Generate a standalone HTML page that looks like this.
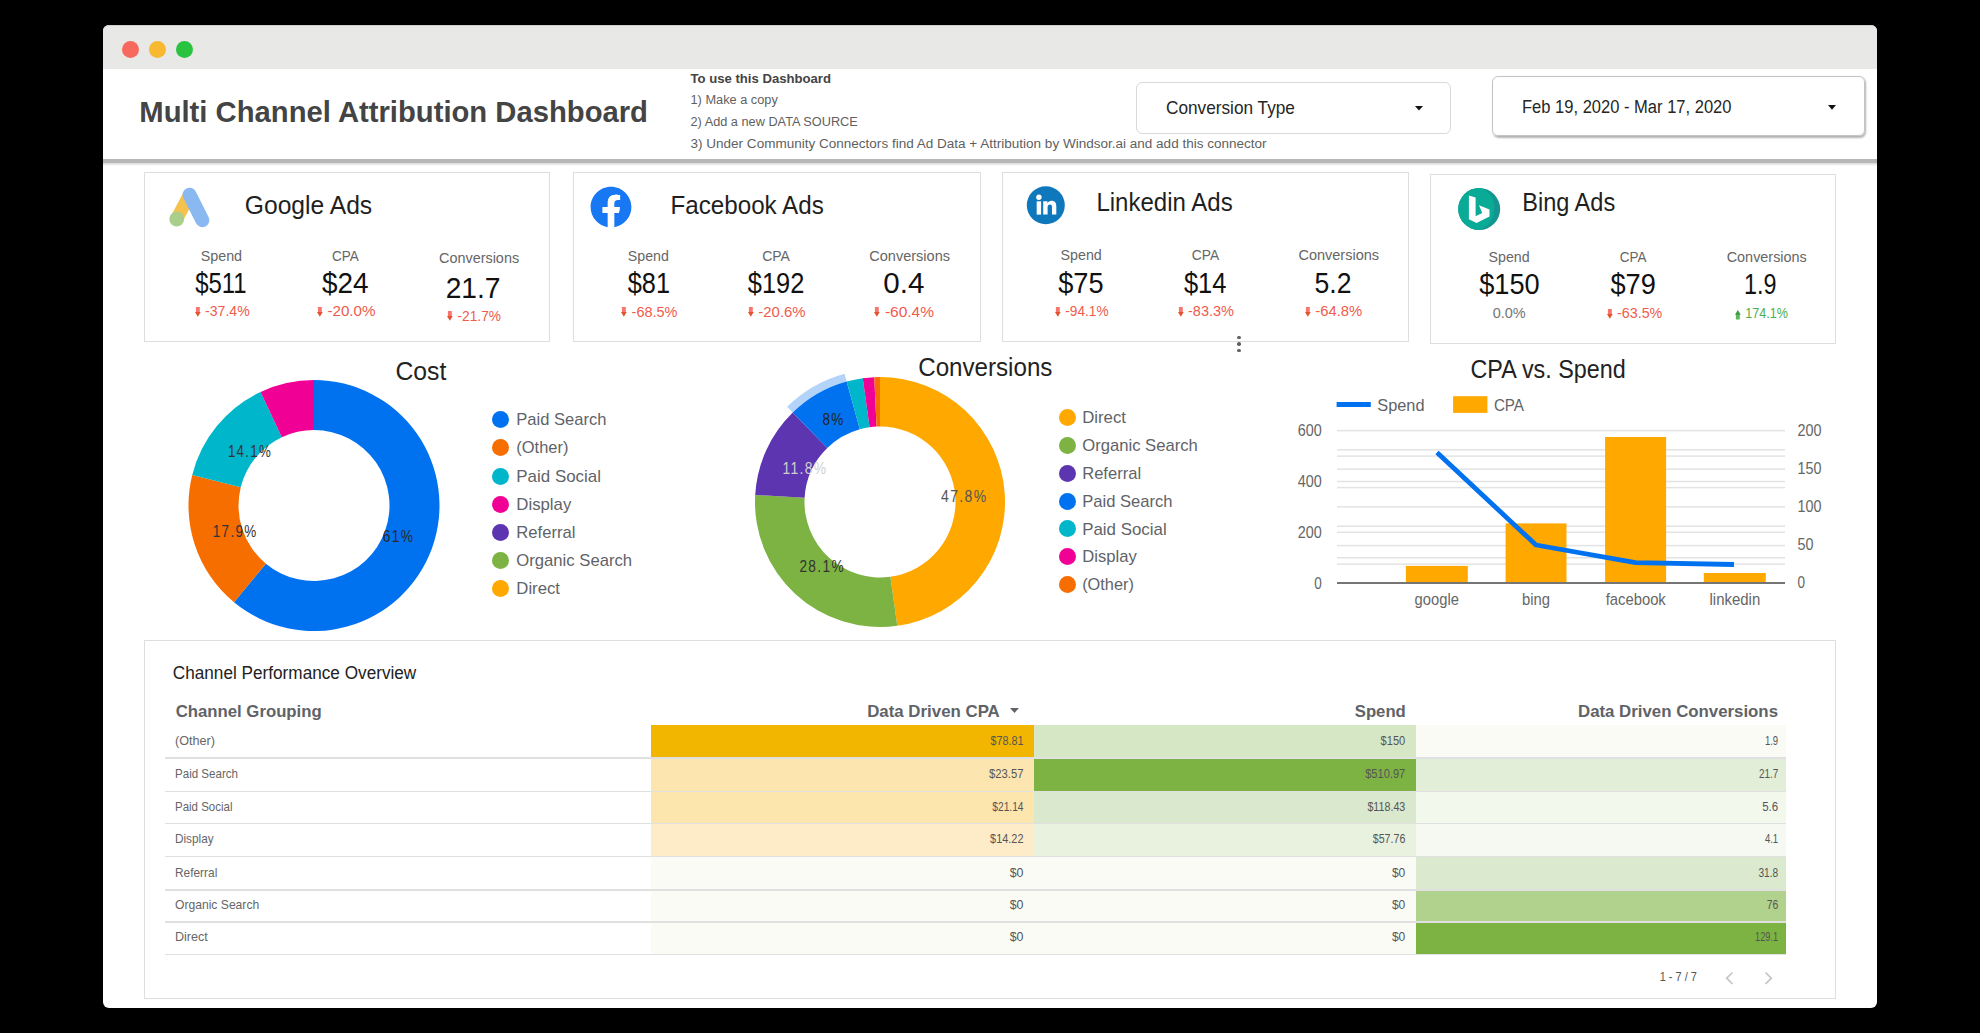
<!DOCTYPE html><html><head><meta charset="utf-8"><style>html,body{margin:0;padding:0;background:#000;width:1980px;height:1033px;overflow:hidden;}.t{position:absolute;white-space:nowrap;font-family:"Liberation Sans",sans-serif;transform-origin:0 0;}</style></head><body><div style="position:absolute;left:103px;top:25px;width:1774px;height:983px;background:#fff;border-radius:6px;"></div>
<div style="position:absolute;left:103px;top:25px;width:1774px;height:44px;background:#e8e8e7;border-radius:6px 6px 0 0;border-top:1px solid #cfcfcf;box-sizing:border-box;"></div>
<div style="position:absolute;left:122.0px;top:40.5px;width:17px;height:17px;background:#f7695e;border-radius:50%;"></div>
<div style="position:absolute;left:149.0px;top:40.5px;width:17px;height:17px;background:#f6b92f;border-radius:50%;"></div>
<div style="position:absolute;left:176.0px;top:40.5px;width:17px;height:17px;background:#2ac340;border-radius:50%;"></div>
<div style="position:absolute;left:1136px;top:82px;width:315px;height:52px;border:1.5px solid #d9d9d9;border-radius:6px;box-sizing:border-box;"></div>
<svg style="position:absolute;left:1414.5px;top:105.5px" width="9" height="6"><path d="M0 0H8L4 4.5Z" fill="#111"/></svg>
<div style="position:absolute;left:1492px;top:76px;width:373px;height:60px;border:1px solid #c4c4c4;border-radius:6px;box-sizing:border-box;box-shadow:1px 1.5px 2px rgba(0,0,0,.3);"></div>
<svg style="position:absolute;left:1828px;top:104.5px" width="9" height="6"><path d="M0 0H8L4 4.7Z" fill="#111"/></svg>
<div style="position:absolute;left:103px;top:159px;width:1774px;height:4px;background:#b6b7b6;"></div>
<div style="position:absolute;left:103px;top:163px;width:1774px;height:3px;background:linear-gradient(#d8d8d8,#fff);"></div>
<div style="position:absolute;left:144px;top:172px;width:406px;height:170px;border:1px solid #dedede;box-sizing:border-box;"></div>
<svg style="position:absolute;left:194.6px;top:306.8px" width="7" height="11"><rect x="0.9" y="0" width="3.9" height="6" fill="#f7776f"/><path d="M0 5H5.7L2.85 9.7Z" fill="#e2522f"/></svg>
<svg style="position:absolute;left:316.9px;top:306.8px" width="7" height="11"><rect x="0.9" y="0" width="3.9" height="6" fill="#f7776f"/><path d="M0 5H5.7L2.85 9.7Z" fill="#e2522f"/></svg>
<svg style="position:absolute;left:447.0px;top:311.1px" width="7" height="11"><rect x="0.9" y="0" width="3.9" height="6" fill="#f7776f"/><path d="M0 5H5.7L2.85 9.7Z" fill="#e2522f"/></svg>
<div style="position:absolute;left:573px;top:172px;width:408px;height:170px;border:1px solid #dedede;box-sizing:border-box;"></div>
<svg style="position:absolute;left:621.1px;top:307.2px" width="7" height="11"><rect x="0.9" y="0" width="3.9" height="6" fill="#f7776f"/><path d="M0 5H5.7L2.85 9.7Z" fill="#e2522f"/></svg>
<svg style="position:absolute;left:747.8px;top:307.2px" width="7" height="11"><rect x="0.9" y="0" width="3.9" height="6" fill="#f7776f"/><path d="M0 5H5.7L2.85 9.7Z" fill="#e2522f"/></svg>
<svg style="position:absolute;left:874.4px;top:307.2px" width="7" height="11"><rect x="0.9" y="0" width="3.9" height="6" fill="#f7776f"/><path d="M0 5H5.7L2.85 9.7Z" fill="#e2522f"/></svg>
<div style="position:absolute;left:1002px;top:172px;width:407px;height:170px;border:1px solid #dedede;box-sizing:border-box;"></div>
<svg style="position:absolute;left:1054.8px;top:306.9px" width="7" height="11"><rect x="0.9" y="0" width="3.9" height="6" fill="#f7776f"/><path d="M0 5H5.7L2.85 9.7Z" fill="#e2522f"/></svg>
<svg style="position:absolute;left:1177.5px;top:306.9px" width="7" height="11"><rect x="0.9" y="0" width="3.9" height="6" fill="#f7776f"/><path d="M0 5H5.7L2.85 9.7Z" fill="#e2522f"/></svg>
<svg style="position:absolute;left:1304.8px;top:306.9px" width="7" height="11"><rect x="0.9" y="0" width="3.9" height="6" fill="#f7776f"/><path d="M0 5H5.7L2.85 9.7Z" fill="#e2522f"/></svg>
<div style="position:absolute;left:1430px;top:174px;width:406px;height:170px;border:1px solid #dedede;box-sizing:border-box;"></div>
<svg style="position:absolute;left:1606.6px;top:308.5px" width="7" height="11"><rect x="0.9" y="0" width="3.9" height="6" fill="#f7776f"/><path d="M0 5H5.7L2.85 9.7Z" fill="#e2522f"/></svg>
<svg style="position:absolute;left:1734.8px;top:309.5px" width="7" height="11"><rect x="0.9" y="4" width="3.9" height="5.5" fill="#5cb85c"/><path d="M0 4.7H5.7L2.85 0Z" fill="#3c9a40"/></svg>
<svg style="position:absolute;left:0;top:0" width="1980" height="1033"><line x1="189.5" y1="194.7" x2="176.7" y2="219" stroke="#f5c24d" stroke-width="13"/><line x1="189.5" y1="194.7" x2="202.3" y2="220.2" stroke="#8ab9f1" stroke-width="14" stroke-linecap="round"/><circle cx="176.7" cy="219" r="7.4" fill="#a9cf8a"/><g transform="translate(590.6,186.6) scale(1.7)"><path d="M24 12.073c0-6.627-5.373-12-12-12s-12 5.373-12 12c0 5.99 4.388 10.954 10.125 11.854v-8.385H7.078v-3.47h3.047V9.43c0-3.007 1.792-4.669 4.533-4.669 1.312 0 2.686.235 2.686.235v2.953H15.83c-1.491 0-1.956.925-1.956 1.874v2.25h3.328l-.532 3.47h-2.796v8.385C19.612 23.027 24 18.062 24 12.073z" fill="#1877f2"/><path d="M16.671 15.543l.532-3.47h-3.328v-2.25c0-.949.465-1.874 1.956-1.874h1.513V4.996s-1.374-.235-2.686-.235c-2.741 0-4.533 1.662-4.533 4.669v2.643H7.078v3.47h3.047v8.385a12.09 12.09 0 003.75 0v-8.385h2.796z" fill="#fff"/></g><circle cx="1045.8" cy="205.3" r="19" fill="#0f78bd"/><circle cx="1038.9" cy="197.2" r="2.7" fill="#fff"/><rect x="1036.7" y="201.3" width="4.4" height="13.3" fill="#fff"/><path d="M1043.2 201.3H1047.4V203.2C1048.2 201.8 1049.6 200.8 1051.6 200.8C1054.9 200.8 1056.3 202.9 1056.3 206.3V214.6H1052V207.2C1052 205.6 1051.5 204.5 1050 204.5C1048.5 204.5 1047.6 205.6 1047.6 207.4V214.6H1043.2Z" fill="#fff"/><clipPath id="bc"><circle cx="1479.2" cy="209" r="21"/></clipPath><circle cx="1479.2" cy="209" r="21" fill="#159590"/><ellipse clip-path="url(#bc)" cx="1476" cy="208.5" rx="18.3" ry="21.5" fill="#0aab96"/><path d="M1468.9 195.4L1475.6 197.6V216.3L1482.2 213L1479 205.2L1489.5 209.6V216.4L1476.6 223L1468.9 219.2Z" fill="#fff"/></svg>
<svg style="position:absolute;left:0;top:0" width="1980" height="1033"><path d="M314.00 380.00A125.5 125.5 0 1 1 234.00 602.20L265.87 563.67A75.5 75.5 0 1 0 314.00 430.00Z" fill="#0072f0"/><path d="M234.00 602.20A125.5 125.5 0 0 1 192.25 475.05L240.76 487.18A75.5 75.5 0 0 0 265.87 563.67Z" fill="#f66d00"/><path d="M192.25 475.05A125.5 125.5 0 0 1 260.56 391.94L281.85 437.19A75.5 75.5 0 0 0 240.76 487.18Z" fill="#00b6cb"/><path d="M260.56 391.94A125.5 125.5 0 0 1 314.00 380.00L314.00 430.00A75.5 75.5 0 0 0 281.85 437.19Z" fill="#f10096"/><path d="M880.00 377.00A125 125 0 0 1 897.22 625.81L890.40 576.78A75.5 75.5 0 0 0 880.00 426.50Z" fill="#ffa800"/><path d="M897.22 625.81A125 125 0 0 1 755.20 494.94L804.62 497.73A75.5 75.5 0 0 0 890.40 576.78Z" fill="#7cb342"/><path d="M755.20 494.94A125 125 0 0 1 792.73 412.51L827.29 447.95A75.5 75.5 0 0 0 804.62 497.73Z" fill="#5e35b1"/><path d="M787.14 406.78A133 133 0 0 1 844.50 373.82L846.64 381.53A125 125 0 0 0 792.73 412.51Z" fill="#b3d3f8"/><path d="M792.73 412.51A125 125 0 0 1 846.64 381.53L859.85 429.24A75.5 75.5 0 0 0 827.29 447.95Z" fill="#0072f0"/><path d="M846.64 381.53A125 125 0 0 1 862.78 378.19L869.60 427.22A75.5 75.5 0 0 0 859.85 429.24Z" fill="#00b6cb"/><path d="M862.78 378.19A125 125 0 0 1 874.27 377.13L876.54 426.58A75.5 75.5 0 0 0 869.60 427.22Z" fill="#f10096"/><path d="M874.27 377.13A125 125 0 0 1 880.00 377.00L880.00 426.50A75.5 75.5 0 0 0 876.54 426.58Z" fill="#f66d00"/></svg>
<div style="position:absolute;left:492.3px;top:411.1px;width:17px;height:17px;background:#0072f0;border-radius:50%;"></div>
<div style="position:absolute;left:492.3px;top:439.3px;width:17px;height:17px;background:#f66d00;border-radius:50%;"></div>
<div style="position:absolute;left:492.3px;top:467.5px;width:17px;height:17px;background:#00b6cb;border-radius:50%;"></div>
<div style="position:absolute;left:492.3px;top:495.7px;width:17px;height:17px;background:#f10096;border-radius:50%;"></div>
<div style="position:absolute;left:492.3px;top:523.9px;width:17px;height:17px;background:#5e35b1;border-radius:50%;"></div>
<div style="position:absolute;left:492.3px;top:552.1px;width:17px;height:17px;background:#7cb342;border-radius:50%;"></div>
<div style="position:absolute;left:492.3px;top:580.3px;width:17px;height:17px;background:#ffa800;border-radius:50%;"></div>
<div style="position:absolute;left:1058.5px;top:408.5px;width:17px;height:17px;background:#ffa800;border-radius:50%;"></div>
<div style="position:absolute;left:1058.5px;top:436.5px;width:17px;height:17px;background:#7cb342;border-radius:50%;"></div>
<div style="position:absolute;left:1058.5px;top:464.5px;width:17px;height:17px;background:#5e35b1;border-radius:50%;"></div>
<div style="position:absolute;left:1058.5px;top:492.5px;width:17px;height:17px;background:#0072f0;border-radius:50%;"></div>
<div style="position:absolute;left:1058.5px;top:520.4px;width:17px;height:17px;background:#00b6cb;border-radius:50%;"></div>
<div style="position:absolute;left:1058.5px;top:548.3px;width:17px;height:17px;background:#f10096;border-radius:50%;"></div>
<div style="position:absolute;left:1058.5px;top:576.3px;width:17px;height:17px;background:#f66d00;border-radius:50%;"></div>
<div style="position:absolute;left:1237.3px;top:335.8px;width:3.4px;height:3.4px;background:#5f6368;border-radius:50%;"></div>
<div style="position:absolute;left:1237.3px;top:342.3px;width:3.4px;height:3.4px;background:#5f6368;border-radius:50%;"></div>
<div style="position:absolute;left:1237.3px;top:348.8px;width:3.4px;height:3.4px;background:#5f6368;border-radius:50%;"></div>
<svg style="position:absolute;left:0;top:0" width="1980" height="1033"><rect x="1337" y="429.85" width="448" height="1.5" fill="#e3e3e3"/><rect x="1337" y="449.05" width="448" height="1.5" fill="#e3e3e3"/><rect x="1337" y="455.35" width="448" height="1.5" fill="#e3e3e3"/><rect x="1337" y="468.45" width="448" height="1.5" fill="#e3e3e3"/><rect x="1337" y="480.75" width="448" height="1.5" fill="#e3e3e3"/><rect x="1337" y="486.85" width="448" height="1.5" fill="#e3e3e3"/><rect x="1337" y="506.15" width="448" height="1.5" fill="#e3e3e3"/><rect x="1337" y="525.45" width="448" height="1.5" fill="#e3e3e3"/><rect x="1337" y="531.55" width="448" height="1.5" fill="#e3e3e3"/><rect x="1337" y="544.85" width="448" height="1.5" fill="#e3e3e3"/><rect x="1337" y="557.05" width="448" height="1.5" fill="#e3e3e3"/><rect x="1337" y="563.35" width="448" height="1.5" fill="#e3e3e3"/><rect x="1405.9" y="565.9" width="61.9" height="17.1" fill="#ffa800"/><rect x="1505.6" y="523.4" width="60.9" height="59.6" fill="#ffa800"/><rect x="1605.1" y="437" width="61.0" height="146.0" fill="#ffa800"/><rect x="1703.8" y="573" width="62.0" height="10.0" fill="#ffa800"/><rect x="1337" y="582" width="448" height="2" fill="#757575"/><polyline points="1437,452.6 1536,545 1635.5,562.6 1734,564.5" fill="none" stroke="#0072f0" stroke-width="4.8" stroke-linejoin="round"/><rect x="1336.6" y="402" width="34.2" height="5" fill="#0072f0"/><rect x="1453.1" y="396.2" width="34.3" height="16.7" fill="#ffa800"/></svg>
<div style="position:absolute;left:144px;top:640px;width:1692px;height:359px;border:1px solid #dedede;box-sizing:border-box;"></div>
<svg style="position:absolute;left:1010px;top:708px" width="10" height="6"><path d="M0 0H9L4.5 5Z" fill="#5f6368"/></svg>
<div style="position:absolute;left:651px;top:725px;width:383px;height:33px;background:#f2b600;"></div>
<div style="position:absolute;left:1034px;top:725px;width:382px;height:33px;background:#d6e7c6;"></div>
<div style="position:absolute;left:1416px;top:725px;width:370px;height:33px;background:#fafbf5;"></div>
<div style="position:absolute;left:165px;top:757.25px;width:1621px;height:1.5px;background:#e0e0e0;"></div>
<div style="position:absolute;left:651px;top:758.75px;width:383px;height:32.64999999999998px;background:#fde5b0;"></div>
<div style="position:absolute;left:1034px;top:758.75px;width:382px;height:32.64999999999998px;background:#7cb342;"></div>
<div style="position:absolute;left:1416px;top:758.75px;width:370px;height:32.64999999999998px;background:#e2eed8;"></div>
<div style="position:absolute;left:165px;top:790.65px;width:1621px;height:1.5px;background:#e0e0e0;"></div>
<div style="position:absolute;left:651px;top:792.15px;width:383px;height:31.550000000000068px;background:#fde5ae;"></div>
<div style="position:absolute;left:1034px;top:792.15px;width:382px;height:31.550000000000068px;background:#dae8cd;"></div>
<div style="position:absolute;left:1416px;top:792.15px;width:370px;height:31.550000000000068px;background:#f3f8ed;"></div>
<div style="position:absolute;left:165px;top:822.95px;width:1621px;height:1.5px;background:#e0e0e0;"></div>
<div style="position:absolute;left:651px;top:824.45px;width:383px;height:31.949999999999932px;background:#fdecc7;"></div>
<div style="position:absolute;left:1034px;top:824.45px;width:382px;height:31.949999999999932px;background:#e8f2df;"></div>
<div style="position:absolute;left:1416px;top:824.45px;width:370px;height:31.949999999999932px;background:#f6f9f1;"></div>
<div style="position:absolute;left:165px;top:855.65px;width:1621px;height:1.5px;background:#e0e0e0;"></div>
<div style="position:absolute;left:651px;top:857.15px;width:383px;height:32.64999999999998px;background:#fbfbf5;"></div>
<div style="position:absolute;left:1034px;top:857.15px;width:382px;height:32.64999999999998px;background:#fbfbf5;"></div>
<div style="position:absolute;left:1416px;top:857.15px;width:370px;height:32.64999999999998px;background:#dbe9ce;"></div>
<div style="position:absolute;left:165px;top:889.05px;width:1621px;height:1.5px;background:#e0e0e0;"></div>
<div style="position:absolute;left:651px;top:890.55px;width:383px;height:31.550000000000068px;background:#fbfbf5;"></div>
<div style="position:absolute;left:1034px;top:890.55px;width:382px;height:31.550000000000068px;background:#fbfbf5;"></div>
<div style="position:absolute;left:1416px;top:890.55px;width:370px;height:31.550000000000068px;background:#b1d28d;"></div>
<div style="position:absolute;left:165px;top:921.35px;width:1621px;height:1.5px;background:#e0e0e0;"></div>
<div style="position:absolute;left:651px;top:922.85px;width:383px;height:31.549999999999955px;background:#fbfbf5;"></div>
<div style="position:absolute;left:1034px;top:922.85px;width:382px;height:31.549999999999955px;background:#fbfbf5;"></div>
<div style="position:absolute;left:1416px;top:922.85px;width:370px;height:31.549999999999955px;background:#7cb342;"></div>
<div style="position:absolute;left:165px;top:953.65px;width:1621px;height:1.5px;background:#e0e0e0;"></div>
<svg style="position:absolute;left:0;top:0" width="1980" height="1033"><path d="M1732.5 972.5L1726.7 978.2L1732.5 984" fill="none" stroke="#c4c4c4" stroke-width="1.7"/><path d="M1765.5 972.5L1771.3 978.2L1765.5 984" fill="none" stroke="#c4c4c4" stroke-width="1.7"/></svg><svg style="position:absolute;left:0;top:0;font-family:'Liberation Sans',sans-serif" width="1980" height="1033"><text x="139.30" y="121.50" font-size="29.80" fill="#444" font-weight="bold" textLength="508.68" lengthAdjust="spacingAndGlyphs">Multi Channel Attribution Dashboard</text>
<text x="690.50" y="82.80" font-size="13.08" fill="#444" font-weight="bold" textLength="140.51" lengthAdjust="spacingAndGlyphs">To use this Dashboard</text>
<text x="690.50" y="104.00" font-size="13.08" fill="#5f5f5f" textLength="87.29" lengthAdjust="spacingAndGlyphs">1) Make a copy</text>
<text x="690.50" y="125.50" font-size="13.08" fill="#5f5f5f" textLength="167.30" lengthAdjust="spacingAndGlyphs">2) Add a new DATA SOURCE</text>
<text x="690.50" y="147.80" font-size="13.08" fill="#5f5f5f" textLength="576.10" lengthAdjust="spacingAndGlyphs">3) Under Community Connectors find Ad Data + Attribution by Windsor.ai and add this connector</text>
<text x="1166.00" y="113.50" font-size="17.88" fill="#262626" textLength="128.92" lengthAdjust="spacingAndGlyphs">Conversion Type</text>
<text x="1522.00" y="113.30" font-size="17.88" fill="#262626" textLength="209.50" lengthAdjust="spacingAndGlyphs">Feb 19, 2020 - Mar 17, 2020</text>
<text x="244.80" y="213.50" font-size="25.15" fill="#1f1f1f" textLength="127.41" lengthAdjust="spacingAndGlyphs">Google Ads</text>
<text x="200.70" y="260.70" font-size="13.95" fill="#666" textLength="41.39" lengthAdjust="spacingAndGlyphs">Spend</text>
<text x="195.20" y="293.00" font-size="28.63" fill="#111" textLength="51.51" lengthAdjust="spacingAndGlyphs">$511</text>
<text x="205.10" y="316.30" font-size="13.95" fill="#ef5b4c" textLength="44.61" lengthAdjust="spacingAndGlyphs">-37.4%</text>
<text x="332.00" y="260.70" font-size="13.95" fill="#666" textLength="26.79" lengthAdjust="spacingAndGlyphs">CPA</text>
<text x="321.90" y="293.00" font-size="28.63" fill="#111" textLength="46.53" lengthAdjust="spacingAndGlyphs">$24</text>
<text x="327.40" y="316.30" font-size="13.95" fill="#ef5b4c" textLength="48.12" lengthAdjust="spacingAndGlyphs">-20.0%</text>
<text x="439.00" y="262.60" font-size="13.95" fill="#666" textLength="80.11" lengthAdjust="spacingAndGlyphs">Conversions</text>
<text x="445.70" y="297.50" font-size="29.80" fill="#111" textLength="54.87" lengthAdjust="spacingAndGlyphs">21.7</text>
<text x="457.50" y="320.60" font-size="13.95" fill="#ef5b4c" textLength="43.51" lengthAdjust="spacingAndGlyphs">-21.7%</text>
<text x="670.40" y="213.80" font-size="25.15" fill="#1f1f1f" textLength="153.40" lengthAdjust="spacingAndGlyphs">Facebook Ads</text>
<text x="627.80" y="261.00" font-size="13.95" fill="#666" textLength="41.09" lengthAdjust="spacingAndGlyphs">Spend</text>
<text x="627.80" y="293.30" font-size="28.63" fill="#111" textLength="42.23" lengthAdjust="spacingAndGlyphs">$81</text>
<text x="631.60" y="316.70" font-size="13.95" fill="#ef5b4c" textLength="45.72" lengthAdjust="spacingAndGlyphs">-68.5%</text>
<text x="762.20" y="261.00" font-size="13.95" fill="#666" textLength="27.79" lengthAdjust="spacingAndGlyphs">CPA</text>
<text x="747.80" y="293.30" font-size="28.63" fill="#111" textLength="56.59" lengthAdjust="spacingAndGlyphs">$192</text>
<text x="758.30" y="316.70" font-size="13.95" fill="#ef5b4c" textLength="47.32" lengthAdjust="spacingAndGlyphs">-20.6%</text>
<text x="869.30" y="261.00" font-size="13.95" fill="#666" textLength="80.71" lengthAdjust="spacingAndGlyphs">Conversions</text>
<text x="883.30" y="293.30" font-size="28.63" fill="#111" textLength="41.11" lengthAdjust="spacingAndGlyphs">0.4</text>
<text x="884.90" y="316.70" font-size="13.95" fill="#ef5b4c" textLength="49.12" lengthAdjust="spacingAndGlyphs">-60.4%</text>
<text x="1096.40" y="211.10" font-size="25.15" fill="#1f1f1f" textLength="136.33" lengthAdjust="spacingAndGlyphs">Linkedin Ads</text>
<text x="1060.50" y="260.00" font-size="13.95" fill="#666" textLength="41.29" lengthAdjust="spacingAndGlyphs">Spend</text>
<text x="1058.20" y="293.00" font-size="28.63" fill="#111" textLength="45.43" lengthAdjust="spacingAndGlyphs">$75</text>
<text x="1065.30" y="316.40" font-size="13.95" fill="#ef5b4c" textLength="43.31" lengthAdjust="spacingAndGlyphs">-94.1%</text>
<text x="1191.80" y="260.00" font-size="13.95" fill="#666" textLength="27.29" lengthAdjust="spacingAndGlyphs">CPA</text>
<text x="1183.90" y="293.00" font-size="28.63" fill="#111" textLength="42.53" lengthAdjust="spacingAndGlyphs">$14</text>
<text x="1188.00" y="316.40" font-size="13.95" fill="#ef5b4c" textLength="45.92" lengthAdjust="spacingAndGlyphs">-83.3%</text>
<text x="1298.40" y="260.00" font-size="13.95" fill="#666" textLength="80.71" lengthAdjust="spacingAndGlyphs">Conversions</text>
<text x="1314.50" y="293.00" font-size="28.63" fill="#111" textLength="36.91" lengthAdjust="spacingAndGlyphs">5.2</text>
<text x="1315.30" y="316.40" font-size="13.95" fill="#ef5b4c" textLength="47.02" lengthAdjust="spacingAndGlyphs">-64.8%</text>
<text x="1522.20" y="210.60" font-size="25.15" fill="#1f1f1f" textLength="93.00" lengthAdjust="spacingAndGlyphs">Bing Ads</text>
<text x="1488.50" y="262.20" font-size="13.95" fill="#666" textLength="41.19" lengthAdjust="spacingAndGlyphs">Spend</text>
<text x="1479.20" y="294.30" font-size="28.63" fill="#111" textLength="60.49" lengthAdjust="spacingAndGlyphs">$150</text>
<text x="1492.70" y="318.00" font-size="13.95" fill="#757575" textLength="32.99" lengthAdjust="spacingAndGlyphs">0.0%</text>
<text x="1619.80" y="262.20" font-size="13.95" fill="#666" textLength="26.69" lengthAdjust="spacingAndGlyphs">CPA</text>
<text x="1610.50" y="294.30" font-size="28.63" fill="#111" textLength="45.33" lengthAdjust="spacingAndGlyphs">$79</text>
<text x="1617.10" y="318.00" font-size="13.95" fill="#ef5b4c" textLength="45.22" lengthAdjust="spacingAndGlyphs">-63.5%</text>
<text x="1726.70" y="262.20" font-size="13.95" fill="#666" textLength="80.11" lengthAdjust="spacingAndGlyphs">Conversions</text>
<text x="1744.10" y="294.30" font-size="28.63" fill="#111" textLength="32.50" lengthAdjust="spacingAndGlyphs">1.9</text>
<text x="1745.30" y="318.00" font-size="13.95" fill="#4caf50" textLength="42.49" lengthAdjust="spacingAndGlyphs">174.1%</text>
<text x="395.50" y="380.20" font-size="25.73" fill="#222" textLength="50.83" lengthAdjust="spacingAndGlyphs">Cost</text>
<text x="918.20" y="375.80" font-size="25.58" fill="#222" textLength="134.22" lengthAdjust="spacingAndGlyphs">Conversions</text>
<text x="1470.50" y="377.60" font-size="25.29" fill="#222" textLength="155.19" lengthAdjust="spacingAndGlyphs">CPA vs. Spend</text>
<text x="227.90" y="456.90" font-size="16.72" fill="#333" letter-spacing="1.6" textLength="44.18" lengthAdjust="spacingAndGlyphs">14.1%</text>
<text x="212.80" y="537.40" font-size="16.72" fill="#333" letter-spacing="1.6" textLength="44.80" lengthAdjust="spacingAndGlyphs">17.9%</text>
<text x="382.80" y="541.70" font-size="16.72" fill="#2a2a2a" letter-spacing="1.6" textLength="31.50" lengthAdjust="spacingAndGlyphs">61%</text>
<text x="822.40" y="425.20" font-size="16.72" fill="#222" letter-spacing="1.6" textLength="22.10" lengthAdjust="spacingAndGlyphs">8%</text>
<text x="782.50" y="473.60" font-size="16.72" fill="#d0d0d0" letter-spacing="1.6" textLength="44.91" lengthAdjust="spacingAndGlyphs">11.8%</text>
<text x="941.10" y="502.10" font-size="16.72" fill="#555" letter-spacing="1.6" textLength="46.45" lengthAdjust="spacingAndGlyphs">47.8%</text>
<text x="799.40" y="571.50" font-size="16.72" fill="#333" letter-spacing="1.6" textLength="45.52" lengthAdjust="spacingAndGlyphs">28.1%</text>
<text x="516.30" y="425.20" font-size="17.15" fill="#5f6368" textLength="90.21" lengthAdjust="spacingAndGlyphs">Paid Search</text>
<text x="516.30" y="453.40" font-size="17.15" fill="#5f6368" textLength="52.09" lengthAdjust="spacingAndGlyphs">(Other)</text>
<text x="516.30" y="481.60" font-size="17.15" fill="#5f6368" textLength="84.71" lengthAdjust="spacingAndGlyphs">Paid Social</text>
<text x="516.30" y="509.80" font-size="17.15" fill="#5f6368" textLength="54.98" lengthAdjust="spacingAndGlyphs">Display</text>
<text x="516.30" y="538.00" font-size="17.15" fill="#5f6368" textLength="59.19" lengthAdjust="spacingAndGlyphs">Referral</text>
<text x="516.30" y="566.20" font-size="17.15" fill="#5f6368" textLength="115.81" lengthAdjust="spacingAndGlyphs">Organic Search</text>
<text x="516.30" y="594.40" font-size="17.15" fill="#5f6368" textLength="43.68" lengthAdjust="spacingAndGlyphs">Direct</text>
<text x="1082.20" y="422.60" font-size="17.15" fill="#5f6368" textLength="43.78" lengthAdjust="spacingAndGlyphs">Direct</text>
<text x="1082.20" y="450.60" font-size="17.15" fill="#5f6368" textLength="115.61" lengthAdjust="spacingAndGlyphs">Organic Search</text>
<text x="1082.20" y="478.60" font-size="17.15" fill="#5f6368" textLength="58.89" lengthAdjust="spacingAndGlyphs">Referral</text>
<text x="1082.20" y="506.60" font-size="17.15" fill="#5f6368" textLength="90.31" lengthAdjust="spacingAndGlyphs">Paid Search</text>
<text x="1082.20" y="534.50" font-size="17.15" fill="#5f6368" textLength="84.51" lengthAdjust="spacingAndGlyphs">Paid Social</text>
<text x="1082.20" y="562.40" font-size="17.15" fill="#5f6368" textLength="54.58" lengthAdjust="spacingAndGlyphs">Display</text>
<text x="1082.20" y="590.40" font-size="17.15" fill="#5f6368" textLength="51.69" lengthAdjust="spacingAndGlyphs">(Other)</text>
<text x="1377.30" y="410.70" font-size="17.15" fill="#5f6368" textLength="47.19" lengthAdjust="spacingAndGlyphs">Spend</text>
<text x="1493.90" y="410.70" font-size="17.15" fill="#5f6368" textLength="30.09" lengthAdjust="spacingAndGlyphs">CPA</text>
<text x="1297.70" y="436.00" font-size="15.70" fill="#666" textLength="24.01" lengthAdjust="spacingAndGlyphs">600</text>
<text x="1297.70" y="486.80" font-size="15.70" fill="#666" textLength="24.01" lengthAdjust="spacingAndGlyphs">400</text>
<text x="1297.70" y="537.70" font-size="15.70" fill="#666" textLength="24.01" lengthAdjust="spacingAndGlyphs">200</text>
<text x="1314.20" y="588.70" font-size="15.70" fill="#666" textLength="7.52" lengthAdjust="spacingAndGlyphs">0</text>
<text x="1797.50" y="436.00" font-size="15.70" fill="#666" textLength="24.01" lengthAdjust="spacingAndGlyphs">200</text>
<text x="1797.50" y="474.10" font-size="15.70" fill="#666" textLength="24.01" lengthAdjust="spacingAndGlyphs">150</text>
<text x="1797.50" y="512.20" font-size="15.70" fill="#666" textLength="24.01" lengthAdjust="spacingAndGlyphs">100</text>
<text x="1797.50" y="550.30" font-size="15.70" fill="#666" textLength="16.00" lengthAdjust="spacingAndGlyphs">50</text>
<text x="1797.50" y="588.40" font-size="15.70" fill="#666" textLength="7.52" lengthAdjust="spacingAndGlyphs">0</text>
<text x="1414.60" y="605.30" font-size="15.70" fill="#666" textLength="44.31" lengthAdjust="spacingAndGlyphs">google</text>
<text x="1522.00" y="605.30" font-size="15.70" fill="#666" textLength="28.01" lengthAdjust="spacingAndGlyphs">bing</text>
<text x="1605.70" y="605.30" font-size="15.70" fill="#666" textLength="60.08" lengthAdjust="spacingAndGlyphs">facebook</text>
<text x="1709.50" y="605.30" font-size="15.70" fill="#666" textLength="50.78" lengthAdjust="spacingAndGlyphs">linkedin</text>
<text x="172.80" y="679.00" font-size="17.44" fill="#222" textLength="243.47" lengthAdjust="spacingAndGlyphs">Channel Performance Overview</text>
<text x="175.70" y="716.70" font-size="17.15" fill="#5f6368" font-weight="bold" textLength="145.99" lengthAdjust="spacingAndGlyphs">Channel Grouping</text>
<text x="867.20" y="716.70" font-size="17.15" fill="#5f6368" font-weight="bold" textLength="132.61" lengthAdjust="spacingAndGlyphs">Data Driven CPA</text>
<text x="1354.80" y="716.70" font-size="17.15" fill="#5f6368" font-weight="bold" textLength="51.01" lengthAdjust="spacingAndGlyphs">Spend</text>
<text x="1578.00" y="716.70" font-size="17.15" fill="#5f6368" font-weight="bold" textLength="200.01" lengthAdjust="spacingAndGlyphs">Data Driven Conversions</text>
<text x="175.00" y="745.00" font-size="12.79" fill="#666" textLength="39.99" lengthAdjust="spacingAndGlyphs">(Other)</text>
<text x="990.50" y="745.00" font-size="12.50" fill="#555" textLength="33.01" lengthAdjust="spacingAndGlyphs">$78.81</text>
<text x="1380.60" y="745.00" font-size="12.50" fill="#555" textLength="24.70" lengthAdjust="spacingAndGlyphs">$150</text>
<text x="1764.90" y="745.00" font-size="12.50" fill="#555" textLength="13.30" lengthAdjust="spacingAndGlyphs">1.9</text>
<text x="175.00" y="778.40" font-size="12.79" fill="#666" textLength="63.00" lengthAdjust="spacingAndGlyphs">Paid Search</text>
<text x="989.00" y="778.40" font-size="12.50" fill="#555" textLength="34.51" lengthAdjust="spacingAndGlyphs">$23.57</text>
<text x="1365.20" y="778.40" font-size="12.50" fill="#555" textLength="40.10" lengthAdjust="spacingAndGlyphs">$510.97</text>
<text x="1758.90" y="778.40" font-size="12.50" fill="#555" textLength="19.29" lengthAdjust="spacingAndGlyphs">21.7</text>
<text x="175.00" y="810.70" font-size="12.79" fill="#666" textLength="57.51" lengthAdjust="spacingAndGlyphs">Paid Social</text>
<text x="992.30" y="810.70" font-size="12.50" fill="#555" textLength="31.21" lengthAdjust="spacingAndGlyphs">$21.14</text>
<text x="1367.40" y="810.70" font-size="12.50" fill="#555" textLength="37.91" lengthAdjust="spacingAndGlyphs">$118.43</text>
<text x="1762.20" y="810.70" font-size="12.50" fill="#555" textLength="16.00" lengthAdjust="spacingAndGlyphs">5.6</text>
<text x="175.00" y="843.40" font-size="12.79" fill="#666" textLength="38.59" lengthAdjust="spacingAndGlyphs">Display</text>
<text x="990.10" y="843.40" font-size="12.50" fill="#555" textLength="33.41" lengthAdjust="spacingAndGlyphs">$14.22</text>
<text x="1372.80" y="843.40" font-size="12.50" fill="#555" textLength="32.51" lengthAdjust="spacingAndGlyphs">$57.76</text>
<text x="1764.90" y="843.40" font-size="12.50" fill="#555" textLength="13.30" lengthAdjust="spacingAndGlyphs">4.1</text>
<text x="175.00" y="876.80" font-size="12.79" fill="#666" textLength="42.29" lengthAdjust="spacingAndGlyphs">Referral</text>
<text x="1009.70" y="876.80" font-size="12.50" fill="#555" textLength="13.80" lengthAdjust="spacingAndGlyphs">$0</text>
<text x="1391.90" y="876.80" font-size="12.50" fill="#555" textLength="13.40" lengthAdjust="spacingAndGlyphs">$0</text>
<text x="1758.40" y="876.80" font-size="12.50" fill="#555" textLength="19.79" lengthAdjust="spacingAndGlyphs">31.8</text>
<text x="175.00" y="909.10" font-size="12.79" fill="#666" textLength="84.21" lengthAdjust="spacingAndGlyphs">Organic Search</text>
<text x="1009.70" y="909.10" font-size="12.50" fill="#555" textLength="13.80" lengthAdjust="spacingAndGlyphs">$0</text>
<text x="1391.90" y="909.10" font-size="12.50" fill="#555" textLength="13.40" lengthAdjust="spacingAndGlyphs">$0</text>
<text x="1766.70" y="909.10" font-size="12.50" fill="#555" textLength="11.50" lengthAdjust="spacingAndGlyphs">76</text>
<text x="175.00" y="941.40" font-size="12.79" fill="#666" textLength="32.79" lengthAdjust="spacingAndGlyphs">Direct</text>
<text x="1009.70" y="941.40" font-size="12.50" fill="#555" textLength="13.80" lengthAdjust="spacingAndGlyphs">$0</text>
<text x="1391.90" y="941.40" font-size="12.50" fill="#555" textLength="13.40" lengthAdjust="spacingAndGlyphs">$0</text>
<text x="1755.10" y="941.40" font-size="12.50" fill="#555" textLength="23.10" lengthAdjust="spacingAndGlyphs">129.1</text>
<text x="1659.70" y="980.50" font-size="12.35" fill="#555" textLength="37.11" lengthAdjust="spacingAndGlyphs">1 - 7 / 7</text></svg></body></html>
